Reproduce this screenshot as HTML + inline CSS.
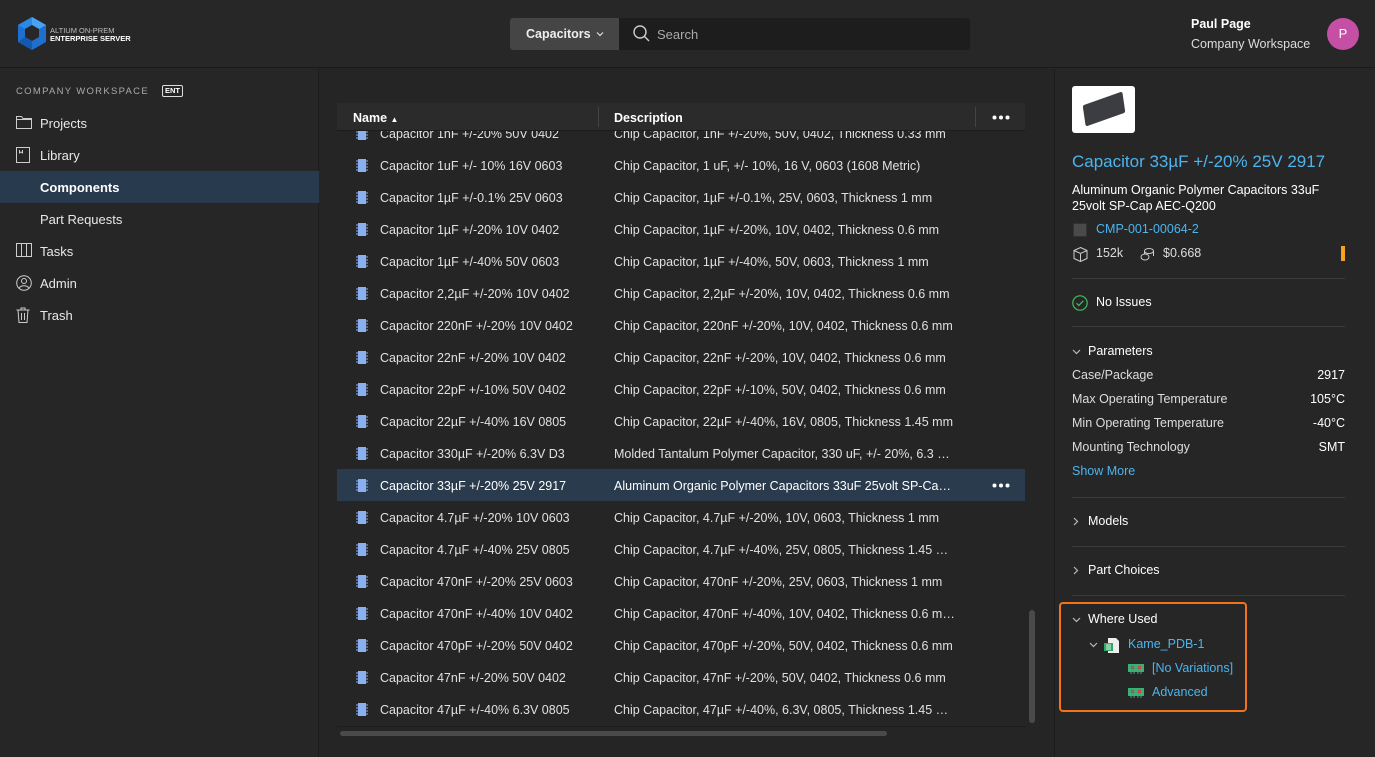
<!DOCTYPE html>
<html><head><meta charset="utf-8"><style>
*{box-sizing:border-box;margin:0;padding:0}
body{width:1375px;height:757px;background:#262626;font-family:"Liberation Sans",sans-serif;color:#e6e6e6;font-size:13px;position:relative;overflow:hidden}
.abs{position:absolute}
.hdr{left:0;top:0;width:1375px;height:68px;background:#272727;border-bottom:1px solid #1a1a1a}
.side{left:0;top:69px;width:319px;height:688px;background:#262626;border-right:1px solid #1b1b1b}
.nav{position:absolute;left:0;width:319px;height:32px;line-height:33px;padding-left:40px;font-size:13px;color:#e8e8e8}
.nav svg{position:absolute;left:16px;top:8px}
.main{left:320px;top:69px;width:735px;height:688px;background:#252525;border-right:1px solid #1b1b1b}
.right{left:1056px;top:69px;width:319px;height:688px;background:#262626}
.th{left:337px;top:103px;width:688px;height:28px;background:#2b2b2b;font-weight:bold;font-size:12.5px;color:#fff;border-bottom:1px solid #1c1c1c}
.body{left:337px;top:131px;width:688px;height:596px;overflow:hidden;border-bottom:1px solid #1c1c1c}
.row{position:relative;height:32px;line-height:34px;font-size:12.5px;color:#e0e0e0;white-space:nowrap}
.row .n{position:absolute;left:43px}
.row .d{position:absolute;left:277px;width:342px;overflow:hidden;text-overflow:ellipsis}
.row .ic{position:absolute;left:19px;top:10px;width:12px;height:13px}
.row.sel{background:#2a3b4d;color:#fff}
.sec{position:absolute;left:1072px;width:273px;border-top:1px solid #3a3a3a}
.prm{position:absolute;left:1072px;width:273px;font-size:12.5px;color:#ddd}
.prm b{position:absolute;right:0;font-weight:normal;color:#fff}
.blue{color:#4db4ee}
</style></head><body>
<div class="abs hdr"></div>
<svg class="abs" style="left:17px;top:17px" width="30" height="33" viewBox="0 0 30 33"><polygon points="15,0 29,8 29,25 15,33 1,25 1,8" fill="#1e6fd0"/><polygon points="15,0 29,8 22,12 15,8" fill="#4aa3f0"/><polygon points="1,8 15,0 15,8 8,12" fill="#2d87e4"/><polygon points="8,12 15,8 22,12 22,20 15,24 8,20" fill="#272727"/><polygon points="1,25 8,20 15,24 15,33" fill="#1558b0"/></svg>
<div class="abs" style="left:50px;top:27px;font-size:7.5px;color:#bbb;line-height:8px">ALTIUM ON-PREM<br><b style="color:#fff">ENTERPRISE SERVER</b></div>
<div class="abs" style="left:510px;top:18px;width:460px;height:32px;background:#1d1d1d;border-radius:3px"></div>
<div class="abs" style="left:510px;top:18px;width:109px;height:32px;background:#454545;border-radius:3px 0 0 3px;font-weight:bold;font-size:12.5px;line-height:32px;padding-left:16px;color:#eee">Capacitors</div>
<svg class="abs" style="left:596px;top:31px" width="8" height="6" viewBox="0 0 8 6"><path d="M1 1.5l3 3 3-3" stroke="#ddd" fill="none" stroke-width="1.2"/></svg>
<svg class="abs" style="left:633px;top:25px" width="17" height="17" viewBox="0 0 17 17"><circle cx="7" cy="7" r="6" stroke="#ccc" stroke-width="1.4" fill="none"/><line x1="11.5" y1="11.5" x2="16" y2="16" stroke="#ccc" stroke-width="1.4"/></svg>
<div class="abs" style="left:657px;top:27px;font-size:13px;color:#aaa">Search</div>
<div class="abs" style="left:1191px;top:17px;font-size:12.5px;font-weight:bold;color:#fff">Paul Page</div>
<div class="abs" style="left:1191px;top:37px;font-size:12.5px;color:#ddd">Company Workspace</div>
<div class="abs" style="left:1327px;top:18px;width:32px;height:32px;border-radius:50%;background:#c44fa5;color:#fff;text-align:center;line-height:32px;font-size:13px">P</div>

<div class="abs side"></div>
<div class="abs" style="left:16px;top:86px;font-size:9.5px;letter-spacing:1.3px;color:#aaa">COMPANY WORKSPACE</div>
<div class="abs" style="left:162px;top:85px;border:1px solid #ddd;border-radius:2px;font-size:7.5px;font-weight:bold;padding:0 2px;line-height:10px;color:#fff">ENT</div>
<div class="nav" style="top:107px"><svg width="16" height="14" viewBox="0 0 16 14"><path d="M.5 1.5h5l1.5 2h8.5v10H.5z M.5 4.5h15" stroke="#ccc" fill="none"/></svg>Projects</div>
<div class="nav" style="top:139px"><svg width="14" height="16" viewBox="0 0 14 16"><rect x=".5" y=".5" width="13" height="15" stroke="#ccc" fill="none"/><path d="M3.5 3v3l1.5-1 1.5 1V3" stroke="#ccc" fill="none"/></svg>Library</div>
<div class="nav" style="top:171px;background:#283a4d;font-weight:bold;color:#fff">Components</div>
<div class="nav" style="top:203px">Part Requests</div>
<div class="nav" style="top:235px"><svg width="16" height="14" viewBox="0 0 16 14"><path d="M.5.5h15v13H.5z M5.5.5v13 M10.5.5v13" stroke="#ccc" fill="none"/></svg>Tasks</div>
<div class="nav" style="top:267px"><svg width="16" height="16" viewBox="0 0 16 16"><circle cx="8" cy="8" r="7.3" stroke="#ccc" fill="none"/><circle cx="8" cy="6" r="2.5" stroke="#ccc" fill="none"/><path d="M3.3 13c1.5-3 7.9-3 9.4 0" stroke="#ccc" fill="none"/></svg>Admin</div>
<div class="nav" style="top:299px"><svg width="14" height="16" viewBox="0 0 14 16"><path d="M.5 3h13 M5 3V1h4v2 M2 3l1 12.5h8L12 3 M5.5 6v7 M8.5 6v7" stroke="#ccc" fill="none"/></svg>Trash</div>

<div class="abs main"></div>
<div class="abs th"><span class="abs" style="left:16px;top:8px">Name <span style="font-size:8px">&#9650;</span></span><span class="abs" style="left:261px;top:4px;width:1px;height:20px;background:#444"></span><span class="abs" style="left:277px;top:8px">Description</span><span class="abs" style="left:638px;top:4px;width:1px;height:20px;background:#444"></span><svg class="abs" style="left:655px;top:12px" width="18" height="5" viewBox="0 0 18 5"><circle cx="2.5" cy="2.5" r="2" fill="#fff"/><circle cx="9" cy="2.5" r="2" fill="#fff"/><circle cx="15.5" cy="2.5" r="2" fill="#fff"/></svg></div>
<div class="abs body"><div style="margin-top:-14px">
<div class="row"><svg class="ic" viewBox="0 0 12 13"><rect x="2" y="0" width="8" height="13" fill="#8ab0f0"/><path d="M0 2h2M0 5h2M0 8h2M0 11h2M10 2h2M10 5h2M10 8h2M10 11h2" stroke="#8ab0f0"/></svg><span class="n">Capacitor 1nF +/-20% 50V 0402</span><span class="d">Chip Capacitor, 1nF +/-20%, 50V, 0402, Thickness 0.33 mm</span></div>
</div></div>
<div class="abs" style="left:340px;top:731px;width:547px;height:5px;border-radius:3px;background:#4a4a4a"></div>
<div class="abs" style="left:1029px;top:610px;width:6px;height:113px;border-radius:3px;background:#4a4a4a"></div>

<div class="abs right"></div>
<div class="abs" style="left:1072px;top:86px;width:63px;height:47px;background:#fff;border-radius:3px"><div style="position:absolute;left:12px;top:12px;width:40px;height:22px;background:#3b3d40;transform:skewY(-12deg) rotate(-8deg);border-radius:2px"></div></div>
<div class="abs blue" style="left:1072px;top:152px;font-size:17px">Capacitor 33µF +/-20% 25V 2917</div>
<div class="abs" style="left:1072px;top:182px;font-size:12.5px;line-height:16px;color:#fff;width:280px">Aluminum Organic Polymer Capacitors 33uF 25volt SP-Cap AEC-Q200</div>
<div class="abs" style="left:1073px;top:223px;width:14px;height:14px;background:#4a4a4a;border:1px solid #333"></div>
<div class="abs blue" style="left:1096px;top:222px;font-size:12.5px">CMP-001-00064-2</div>
<svg class="abs" style="left:1073px;top:247px" width="15" height="15" viewBox="0 0 15 15"><path d="M7.5.5l6.5 3v8l-6.5 3-6.5-3v-8z M1 3.5l6.5 3 6.5-3 M7.5 6.5v8" stroke="#ccc" fill="none"/></svg>
<div class="abs" style="left:1096px;top:246px;font-size:12.5px;color:#ddd">152k</div>
<svg class="abs" style="left:1140px;top:247px" width="15" height="15" viewBox="0 0 15 15"><ellipse cx="9" cy="4" rx="4.5" ry="2.5" stroke="#ccc" fill="none"/><path d="M4.5 4v5 M13.5 4v5" stroke="#ccc"/><ellipse cx="5" cy="10" rx="4" ry="3" stroke="#ccc" fill="#262626"/></svg>
<div class="abs" style="left:1163px;top:246px;font-size:12.5px;color:#ddd">$0.668</div>
<div class="abs" style="left:1341px;top:246px;width:4px;height:15px;background:#f7a21b"></div>
<div class="sec" style="top:278px"></div>
<svg class="abs" style="left:1072px;top:295px" width="16" height="16" viewBox="0 0 16 16"><circle cx="8" cy="8" r="7.2" stroke="#3fbf5a" stroke-width="1.2" fill="none"/><path d="M4.5 8.2l2.3 2.3 4.5-4.7" stroke="#3fbf5a" stroke-width="1.2" fill="none"/></svg>
<div class="abs" style="left:1096px;top:295px;font-size:12.5px;color:#fff">No Issues</div>
<div class="sec" style="top:326px"></div>
<svg class="abs" style="left:1072px;top:349px" width="9" height="6" viewBox="0 0 9 6"><path d="M1 1l3.5 3.5L8 1" stroke="#bbb" fill="none" stroke-width="1.2"/></svg>
<div class="abs" style="left:1088px;top:344px;font-size:12.5px;color:#fff">Parameters</div>
<div class="prm" style="top:368px">Case/Package<b>2917</b></div>
<div class="prm" style="top:392px">Max Operating Temperature<b>105°C</b></div>
<div class="prm" style="top:416px">Min Operating Temperature<b>-40°C</b></div>
<div class="prm" style="top:440px">Mounting Technology<b>SMT</b></div>
<div class="abs blue" style="left:1072px;top:464px;font-size:12.5px">Show More</div>
<div class="sec" style="top:497px"></div>
<svg class="abs" style="left:1073px;top:517px" width="6" height="9" viewBox="0 0 6 9"><path d="M1 1l3.5 3.5L1 8" stroke="#bbb" fill="none" stroke-width="1.2"/></svg>
<div class="abs" style="left:1088px;top:514px;font-size:12.5px;color:#fff">Models</div>
<div class="sec" style="top:546px"></div>
<svg class="abs" style="left:1073px;top:566px" width="6" height="9" viewBox="0 0 6 9"><path d="M1 1l3.5 3.5L1 8" stroke="#bbb" fill="none" stroke-width="1.2"/></svg>
<div class="abs" style="left:1088px;top:563px;font-size:12.5px;color:#fff">Part Choices</div>
<div class="sec" style="top:595px"></div>
<div class="abs" style="left:1059px;top:602px;width:188px;height:110px;border:2px solid #f3731b;border-radius:4px;background:#262626"></div>
<svg class="abs" style="left:1072px;top:617px" width="9" height="6" viewBox="0 0 9 6"><path d="M1 1l3.5 3.5L8 1" stroke="#bbb" fill="none" stroke-width="1.2"/></svg>
<div class="abs" style="left:1088px;top:612px;font-size:12.5px;color:#fff">Where Used</div>
<svg class="abs" style="left:1089px;top:642px" width="9" height="6" viewBox="0 0 9 6"><path d="M1 1l3.5 3.5L8 1" stroke="#bbb" fill="none" stroke-width="1.2"/></svg>
<svg class="abs" style="left:1103px;top:637px" width="17" height="17" viewBox="0 0 17 17"><path d="M5 1h8l3 3v12H5z" fill="#eee"/><rect x="1" y="6" width="9" height="8" fill="#2fa864"/><path d="M3 8h5M3 10h5M3 12h5" stroke="#eee"/></svg>
<div class="abs blue" style="left:1128px;top:637px;font-size:12.5px">Kame_PDB-1</div>
<svg class="abs" style="left:1128px;top:663px" width="16" height="12" viewBox="0 0 16 12"><rect x="0" y="1" width="16" height="8" fill="#35b27a"/><path d="M3 8v3M6 8v3M10 8v3M13 8v3" stroke="#35b27a"/><path d="M3 3l3 3M6 3l-3 3M10 3l3 3M13 3l-3 3" stroke="#c33"/></svg>
<div class="abs blue" style="left:1152px;top:661px;font-size:12.5px">[No Variations]</div>
<svg class="abs" style="left:1128px;top:687px" width="16" height="12" viewBox="0 0 16 12"><rect x="0" y="1" width="16" height="8" fill="#35b27a"/><path d="M3 8v3M6 8v3M10 8v3M13 8v3" stroke="#35b27a"/><path d="M3 3l3 3M6 3l-3 3M10 3l3 3M13 3l-3 3" stroke="#c33"/></svg>
<div class="abs blue" style="left:1152px;top:685px;font-size:12.5px">Advanced</div>
<script>
var R=[["1uF +/- 10% 16V 0603","Chip Capacitor, 1 uF, +/- 10%, 16 V, 0603 (1608 Metric)"],
["1µF +/-0.1% 25V 0603","Chip Capacitor, 1µF +/-0.1%, 25V, 0603, Thickness 1 mm"],
["1µF +/-20% 10V 0402","Chip Capacitor, 1µF +/-20%, 10V, 0402, Thickness 0.6 mm"],
["1µF +/-40% 50V 0603","Chip Capacitor, 1µF +/-40%, 50V, 0603, Thickness 1 mm"],
["2,2µF +/-20% 10V 0402","Chip Capacitor, 2,2µF +/-20%, 10V, 0402, Thickness 0.6 mm"],
["220nF +/-20% 10V 0402","Chip Capacitor, 220nF +/-20%, 10V, 0402, Thickness 0.6 mm"],
["22nF +/-20% 10V 0402","Chip Capacitor, 22nF +/-20%, 10V, 0402, Thickness 0.6 mm"],
["22pF +/-10% 50V 0402","Chip Capacitor, 22pF +/-10%, 50V, 0402, Thickness 0.6 mm"],
["22µF +/-40% 16V 0805","Chip Capacitor, 22µF +/-40%, 16V, 0805, Thickness 1.45 mm"],
["330µF +/-20% 6.3V D3","Molded Tantalum Polymer Capacitor, 330 uF, +/- 20%, 6.3 V, D3"],
["33µF +/-20% 25V 2917","Aluminum Organic Polymer Capacitors 33uF 25volt SP-Cap AEC-Q200"],
["4.7µF +/-20% 10V 0603","Chip Capacitor, 4.7µF +/-20%, 10V, 0603, Thickness 1 mm"],
["4.7µF +/-40% 25V 0805","Chip Capacitor, 4.7µF +/-40%, 25V, 0805, Thickness 1.45 mm"],
["470nF +/-20% 25V 0603","Chip Capacitor, 470nF +/-20%, 25V, 0603, Thickness 1 mm"],
["470nF +/-40% 10V 0402","Chip Capacitor, 470nF +/-40%, 10V, 0402, Thickness 0.6 mm m"],
["470pF +/-20% 50V 0402","Chip Capacitor, 470pF +/-20%, 50V, 0402, Thickness 0.6 mm"],
["47nF +/-20% 50V 0402","Chip Capacitor, 47nF +/-20%, 50V, 0402, Thickness 0.6 mm"],
["47µF +/-40% 6.3V 0805","Chip Capacitor, 47µF +/-40%, 6.3V, 0805, Thickness 1.45 mm"]];
var c=document.querySelector('.body>div'),ic=c.querySelector('.ic').outerHTML,h='';
R.forEach(function(r,i){var s=i==10;h+='<div class="row'+(s?' sel':'')+'">'+ic+'<span class="n">Capacitor '+r[0]+'</span><span class="d">'+r[1]+'</span>'+(s?'<svg style="position:absolute;left:655px;top:14px" width="18" height="5" viewBox="0 0 18 5"><circle cx="2.5" cy="2.5" r="2" fill="#fff"/><circle cx="9" cy="2.5" r="2" fill="#fff"/><circle cx="15.5" cy="2.5" r="2" fill="#fff"/></svg>':'')+'</div>';});
c.insertAdjacentHTML('beforeend',h);
</script>
</body></html>
